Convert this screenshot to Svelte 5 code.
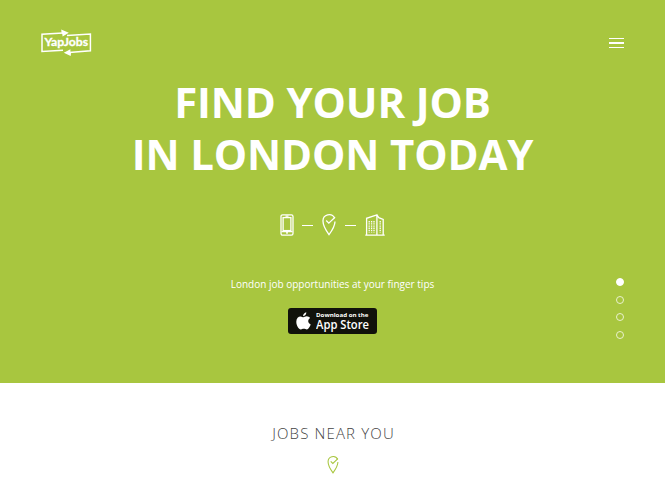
<script>
  const lines = ['FIND YOUR JOB', 'IN LONDON TODAY'];
  const slides = [0, 1, 2, 3];
  let active = $state(0);
</script>

{#snippet pin()}
  <path d="M12.7 4.1A6.2 6.2 0 0 0 1 7.2C1 12.2 7 20.6 7 20.6S13 12.4 13 7.4" />
  <path d="M4.2 6.5 6.8 9.1 13 3.2" />
{/snippet}

<main>
  <section class="hero">
    <header>
      <a class="logo" href="#home" aria-label="YapJobs">
        <svg width="51" height="28" viewBox="0 0 51 28">
          <path class="frame" d="M22 4.1 1 5.3V22.5L22 21.2M26 6.6 49.4 5.1V21.8L28 23.6" />
          <path class="tip" d="M20.5 3.4 20.2.6 27.8 3.8 21.6 7.6 21.3 5Z" />
          <path class="tip" d="M30 24.3 29.7 27 22.8 23.7 29.4 20.2V22.6Z" />
          <text x="3.4" y="17.4" textLength="43.8" lengthAdjust="spacingAndGlyphs">YapJobs</text>
        </svg>
      </a>
      <button class="menu" aria-label="Menu"><span></span><span></span><span></span></button>
    </header>

    <h1>{#each lines as line}<span>{line}</span>{/each}</h1>

    <div class="steps">
      <svg width="14" height="22" viewBox="0 0 14 22">
        <rect x="1" y=".8" width="12" height="20.4" rx="1.6" />
        <rect x="3.1" y="3.6" width="7.8" height="13" />
        <path d="M5.5 2.2h3M6.2 19h1.6M1.5 17.7h11" />
      </svg>
      <i></i>
      <svg width="14" height="22" viewBox="0 0 14 22">{@render pin()}</svg>
      <i class="second"></i>
      <svg width="20" height="22" viewBox="0 0 20 22">
        <path d="M.3 21.1h19.4M1.6 21V4.3L11.9.9V21M12 1 13.8 3.6 18.2 5.4V21" />
        <path class="windows" d="M4.2 7v11.5M6.6 7v11.5M9 7v11.5M15.2 7v11.5" />
      </svg>
    </div>

    <p>London job opportunities at your finger tips</p>

    <a class="store" href="#download" aria-label="Download on the App Store">
      <svg width="15" height="18" viewBox="0 0 15 18">
        <path d="M10.3.2C10.5 2.2 8.9 4.1 7.1 4.2 6.9 2.3 8.6.5 10.3.2ZM7.4 5.2C8.2 5.2 9.1 4.3 10.7 4.3 12.1 4.3 13.4 5 14.1 6.1 11.4 7.7 11.7 11.2 14.7 12.5 13.8 14.8 12.4 17.4 10.8 17.4 9.7 17.4 9.2 16.7 7.8 16.7 6.4 16.7 5.9 17.4 4.9 17.4 2.7 17.4.3 13.4.3 9.7.3 6.3 2.4 4.4 4.6 4.4 5.8 4.4 6.7 5.2 7.4 5.2Z" />
      </svg>
      <svg class="label" width="56" height="26" viewBox="0 0 56 26">
        <text class="small" x="0" y="8.6" textLength="52.5" lengthAdjust="spacingAndGlyphs">Download on the</text>
        <text class="large" x="0" y="20.6" textLength="53" lengthAdjust="spacingAndGlyphs">App Store</text>
      </svg>
    </a>

    <nav aria-label="Slides">
      {#each slides as slide}
        <button class:active={active === slide} aria-label={`Slide ${slide + 1}`} onclick={() => (active = slide)}></button>
      {/each}
    </nav>
  </section>

  <section class="near">
    <h2>JOBS NEAR YOU</h2>
    <svg width="12" height="18" viewBox="0 0 14 22">{@render pin()}</svg>
  </section>
</main>

<style>
  :global(body) {
    margin: 0;
    background: #fff;
  }
  main {
    height: 500px;
    overflow: hidden;
    font-family: 'Open Sans', 'Noto Sans', sans-serif;
  }
  svg {
    display: block;
    fill: none;
    stroke: currentColor;
    stroke-width: 1.3;
    flex: none;
  }
  button {
    padding: 0;
    border: 0;
    background: none;
    color: inherit;
    cursor: pointer;
  }
  .hero {
    position: relative;
    box-sizing: border-box;
    height: 383px;
    padding-top: 29px;
    display: flex;
    flex-direction: column;
    align-items: center;
    background: #a8c63f;
    color: #fff;
  }
  header {
    box-sizing: border-box;
    width: 100%;
    height: 28px;
    padding: 0 41px;
    display: flex;
    justify-content: space-between;
    align-items: center;
  }
  .logo {
    color: #fff;
  }
  .logo .frame {
    stroke-width: 1.5;
  }
  .logo .tip {
    fill: #fff;
    stroke: none;
  }
  .logo text {
    fill: #fff;
    stroke: #fff;
    stroke-width: 0.3;
    font: 700 12px Lato, sans-serif;
  }
  .menu {
    width: 15px;
    display: flex;
    flex-direction: column;
    gap: 3px;
  }
  .menu span {
    height: 1.4px;
    background: #fff;
  }
  h1 {
    margin: 19px 0 0;
    font-size: 42px;
    line-height: 52px;
    font-weight: 700;
    letter-spacing: -0.15px;
    text-align: center;
    white-space: nowrap;
  }
  h1 span {
    display: block;
  }
  .steps {
    margin-top: 34px;
    display: flex;
    align-items: center;
  }
  .steps i {
    width: 11px;
    height: 1px;
    margin: 0 9px 0 8px;
    background: #fff;
  }
  .steps .second {
    margin-left: 9px;
  }
  .steps .windows {
    stroke-width: 1.3;
    stroke-dasharray: 1.4 0.8;
  }
  p {
    margin: 41px 0 0;
    font-size: 10px;
    line-height: 14px;
    white-space: nowrap;
  }
  .store {
    box-sizing: border-box;
    width: 89px;
    height: 26px;
    margin-top: 17px;
    padding-left: 8px;
    display: flex;
    align-items: center;
    gap: 5px;
    border-radius: 3px;
    background: #11120b;
    color: #fff;
    text-decoration: none;
  }
  .store svg {
    fill: #fff;
    stroke: none;
  }
  .label .small {
    font-size: 6px;
    font-weight: 700;
  }
  .label .large {
    font-size: 12.8px;
    font-weight: 600;
  }
  nav {
    position: absolute;
    right: 41px;
    top: 278px;
    display: flex;
    flex-direction: column;
    gap: 9.6px;
  }
  nav button {
    box-sizing: border-box;
    width: 8px;
    height: 8px;
    border: 1px solid #e9f1cd;
    border-radius: 50%;
  }
  nav .active {
    border-color: #fff;
    background: #fff;
  }
  .near {
    padding-top: 40px;
    display: flex;
    flex-direction: column;
    align-items: center;
    color: #a8c63f;
  }
  h2 {
    margin: 0 0 13px;
    padding-left: 2px;
    font-size: 15px;
    line-height: 20px;
    font-weight: 300;
    letter-spacing: 1.15px;
    color: #444;
  }
</style>
